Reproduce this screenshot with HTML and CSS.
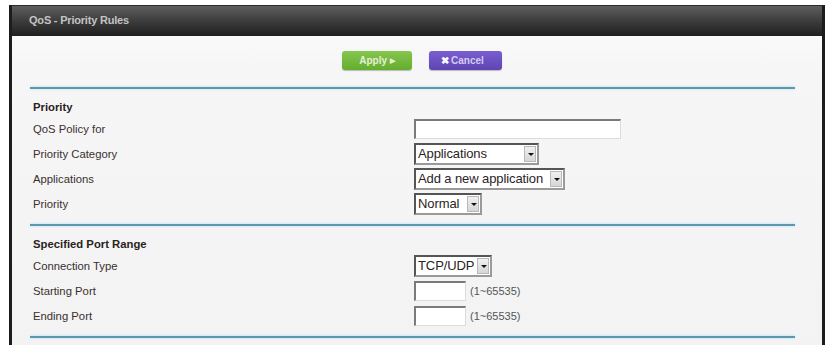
FILE: index.html
```html
<!DOCTYPE html>
<html>
<head>
<meta charset="utf-8">
<link rel="stylesheet" href="styles.css">
</head>
<body>
<div class="frame">
  <div class="header">QoS - Priority Rules</div>
  <div class="content">
    <div class="buttons">
      <div class="btn apply">Apply <span class="tri">&#9654;</span></div>
      <div class="btn cancel"><span class="x">&#10006;</span>Cancel</div>
    </div>
    <div class="divider"></div>
    <div class="section">
      <div class="title">Priority</div>
      <div class="row"><div class="label">QoS Policy for</div><div class="field"><div class="textbox wide"></div></div></div>
      <div class="row"><div class="label">Priority Category</div><div class="field"><div class="select w125"><span class="val">Applications</span><span class="arrow"></span></div></div></div>
      <div class="row"><div class="label">Applications</div><div class="field"><div class="select w151"><span class="val">Add a new application</span><span class="arrow"></span></div></div></div>
      <div class="row"><div class="label">Priority</div><div class="field"><div class="select w68"><span class="val">Normal</span><span class="arrow"></span></div></div></div>
    </div>
    <div class="divider"></div>
    <div class="section">
      <div class="title">Specified Port Range</div>
      <div class="row"><div class="label">Connection Type</div><div class="field"><div class="select w78"><span class="val">TCP/UDP</span><span class="arrow"></span></div></div></div>
      <div class="row"><div class="label">Starting Port</div><div class="field"><div class="textbox port"></div><span class="hint">(1~65535)</span></div></div>
      <div class="row"><div class="label">Ending Port</div><div class="field"><div class="textbox port"></div><span class="hint">(1~65535)</span></div></div>
    </div>
    <div class="divider last"></div>
  </div>
</div>
</body>
</html>
```

FILE: styles.css
```css
html, body {
  margin: 0;
  padding: 0;
  background: #ffffff;
}
body {
  font-family: "Liberation Sans", Arial, sans-serif;
  width: 829px;
  height: 345px;
  overflow: hidden;
}
.frame {
  margin: 5px 0 0 9px;
  width: 810px;
  height: 340px;
  border-left: 3px solid #1c1c1c;
  border-right: 3px solid #1c1c1c;
  border-top: 1px solid #2a2a2a;
  background: linear-gradient(#fdfdfd 0px, #f6f6f6 60px, #f3f3f3 100%);
  display: flex;
  flex-direction: column;
}
.header {
  height: 30px;
  background: linear-gradient(#5e5e5e, #3c3c3c 50%, #1f1f1f);
  color: #c4c4c4;
  font-size: 11px;
  font-weight: bold;
  line-height: 29px;
  padding-left: 17px;
  letter-spacing: -0.2px;
}
.content {
  padding: 0 27px 0 18px;
}
.buttons {
  display: flex;
  justify-content: center;
  gap: 17px;
  padding: 15px 0 0 19px;
  height: 19px;
  margin-bottom: 17px;
}
.btn {
  height: 19px;
  border-radius: 3px;
  color: #e3f0d6;
  font-size: 10px;
  font-weight: bold;
  line-height: 19px;
  text-align: center;
  box-shadow: 0 1px 1px rgba(0,0,0,0.25);
}
.apply {
  width: 70px;
  background: linear-gradient(#86c64f, #64ad2e);
}
.apply .tri {
  font-size: 7px;
  vertical-align: 1px;
}
.cancel {
  width: 73px;
  background: linear-gradient(#7a5ed0, #5e44b2);
  color: #d4ccf2;
  text-align: left;
  padding-left: 0;
}
.cancel .x {
  display: inline-block;
  margin: 0 2px 0 12px;
  color: #ffffff;
  font-size: 10px;
}
.divider {
  height: 2px;
  background: #5c97ae;
  box-shadow: 0 -1px 2px #cfe8f3, 0 1px 2px #d6ebf4;
}
.section {
  padding: 9px 0 8px 3px;
  font-size: 11.3px;
  color: #3a3030;
}
.title {
  font-weight: bold;
  line-height: 18px;
  height: 18px;
  color: #2a2222;
}
.row {
  display: flex;
  align-items: center;
  height: 25px;
}
.label {
  width: 381px;
}
.field {
  display: flex;
  align-items: center;
}
.textbox {
  height: 17px;
  background: #ffffff;
  border-top: 2px solid #7a7a7a;
  border-left: 2px solid #7a7a7a;
  border-right: 1px solid #dcdcdc;
  border-bottom: 1px solid #dcdcdc;
}
.textbox.wide { width: 204px; }
.textbox.port { width: 49px; }
.hint {
  margin-left: 4px;
  font-size: 11px;
  color: #555;
}
.select {
  display: flex;
  align-items: center;
  height: 18px;
  background: #ffffff;
  border-top: 2px solid #555;
  border-left: 2px solid #555;
  border-right: 2px solid #9a9a9a;
  border-bottom: 2px solid #9a9a9a;
  font-size: 13px;
  color: #2a2424;
  box-sizing: content-box;
}
.select .val {
  flex: 1;
  padding-left: 2px;
  white-space: nowrap;
  letter-spacing: -0.1px;
}
.select .arrow {
  width: 12px;
  height: 16px;
  margin-right: 1px;
  background: linear-gradient(#f0f0f0, #d6d6d6);
  border: 1px solid #b8b8b8;
  box-sizing: border-box;
  position: relative;
}
.select .arrow::after {
  content: "";
  position: absolute;
  left: 3px;
  top: 6px;
  border-left: 3px solid transparent;
  border-right: 3px solid transparent;
  border-top: 3px solid #111;
}
.w125 { width: 121px; }
.w151 { width: 147px; }
.w68 { width: 64px; }
.w78 { width: 74px; }
```
